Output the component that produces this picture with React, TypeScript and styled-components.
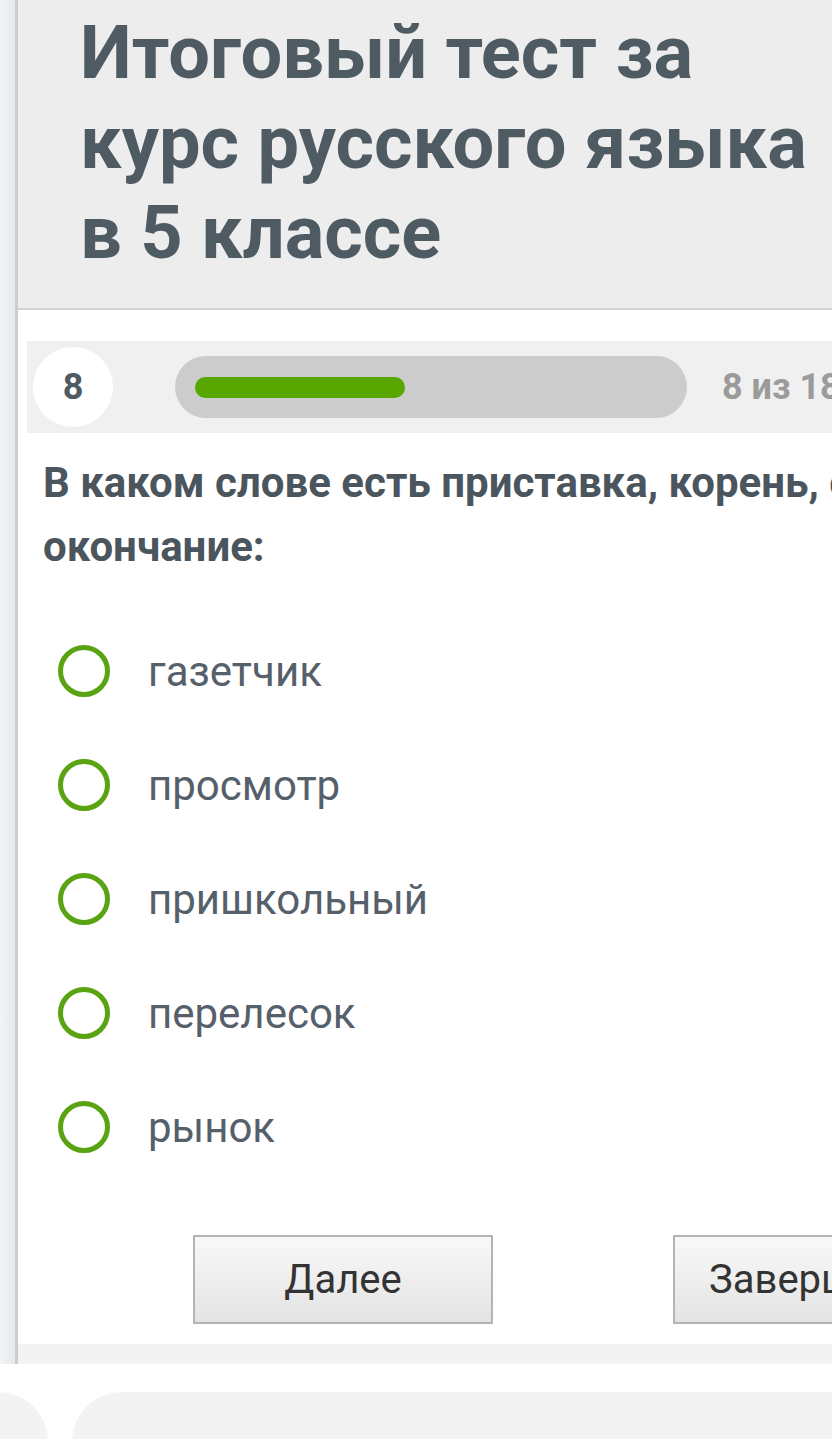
import styled, { createGlobalStyle } from 'styled-components';

const GlobalStyle = createGlobalStyle`
  html, body {
    margin: 0;
    padding: 0;
    background: #ffffff;
  }
  body {
    font-family: Roboto, 'Noto Sans', Arial, sans-serif;
    overflow: hidden;
  }
`;

const answers = ['газетчик', 'просмотр', 'пришкольный', 'перелесок', 'рынок'];
const current = 8;
const total = 18;

function App() {
  const progress = (current / total) * 100;

  return (
    <>
      <GlobalStyle />
      <Screen>
        <Page>
          <Gutter />
          <Main>
            <Header>
              <Title>Итоговый тест за курс русского языка в 5 классе</Title>
            </Header>

            <Content>
              <ProgressRow>
                <Number>{current}</Number>
                <Track>
                  <Fill style={{ width: `${progress}%` }} />
                </Track>
                <Counter>
                  {current} из {total}
                </Counter>
              </ProgressRow>

              <Question>В каком слове есть приставка, корень, суффикс и окончание:</Question>

              <Answers>
                {answers.map((a) => (
                  <Answer key={a}>
                    <Radio />
                    <AnswerText>{a}</AnswerText>
                  </Answer>
                ))}
              </Answers>

              <Buttons>
                <Button>Далее</Button>
                <Button>Завершить</Button>
              </Buttons>
            </Content>

            <BottomStrip />
          </Main>
        </Page>

        <Cards>
          <Card $side="left" />
          <Card $side="right" />
        </Cards>
      </Screen>
    </>
  );
}
export default App;

const Screen = styled.div`
  width: 832px;
  height: 1439px;
  overflow: hidden;
  background: #ffffff;
`;

const Page = styled.div`
  display: flex;
  width: 832px;
`;

const Gutter = styled.div`
  width: 15px;
  flex-shrink: 0;
  background: linear-gradient(to right, #f2f4f5, #e6e9eb);
`;

const Main = styled.div`
  flex: 1;
  min-width: 0;
  border-left: 3px solid #cdcdcd;
  overflow: hidden;
`;

const Header = styled.div`
  background: #ededed;
  border-bottom: 2px solid #d2d2d2;
  padding: 8px 0 30px 62px;
  height: 270px;
`;

const Title = styled.h1`
  margin: 0;
  font-family: Roboto, sans-serif;
  font-size: 74px;
  line-height: 90px;
  font-weight: 700;
  color: #4f5b62;
  width: 740px;
`;

const Content = styled.div`
  padding: 31px 0 20px 9px;
  width: 1000px;
`;

const ProgressRow = styled.div`
  display: flex;
  align-items: center;
  height: 92px;
  background: #f0f0f0;
  padding-left: 6px;
`;

const Number = styled.div`
  width: 80px;
  height: 80px;
  border-radius: 50%;
  background: #ffffff;
  display: flex;
  align-items: center;
  justify-content: center;
  font-size: 36px;
  font-weight: 700;
  color: #4f5b62;
  flex-shrink: 0;
`;

const Track = styled.div`
  margin-left: 62px;
  width: 512px;
  height: 62px;
  border-radius: 31px;
  background: #cccccc;
  padding: 0 20px;
  box-sizing: border-box;
  display: flex;
  align-items: center;
  flex-shrink: 0;
`;

const Fill = styled.div`
  height: 21px;
  border-radius: 11px;
  background: #58a700;
`;

const Counter = styled.div`
  margin-left: 35px;
  font-size: 36px;
  font-weight: 700;
  color: #9b9b9b;
  white-space: nowrap;
`;

const Question = styled.div`
  margin-top: 18px;
  padding-left: 16px;
  width: 1000px;
  font-size: 42px;
  line-height: 64px;
  font-weight: 700;
  color: #4a555d;
`;

const Answers = styled.div`
  margin-top: 35px;
  display: flex;
  flex-direction: column;
  padding-left: 31px;
`;

const Answer = styled.div`
  display: flex;
  align-items: center;
  height: 114px;
`;

const Radio = styled.div`
  width: 42px;
  height: 42px;
  border: 5px solid #5aa312;
  border-radius: 50%;
  flex-shrink: 0;
`;

const AnswerText = styled.div`
  margin-left: 38px;
  font-size: 42px;
  color: #56606a;
`;

const Buttons = styled.div`
  margin-top: 51px;
  display: flex;
  gap: 180px;
  padding-left: 166px;
`;

const Button = styled.button`
  width: 300px;
  height: 89px;
  border: 2px solid #b4b4b4;
  border-radius: 0;
  background: linear-gradient(to bottom, #f9f9f9, #e3e3e3);
  font-family: Roboto, sans-serif;
  font-size: 40px;
  color: #333333;
  white-space: nowrap;
  flex-shrink: 0;
  padding: 0 0 0 34px;
  text-align: left;
  &:first-child {
    padding: 0;
    text-align: center;
  }
`;

const BottomStrip = styled.div`
  height: 20px;
  background: #f3f3f4;
`;

const Cards = styled.div`
  display: flex;
  gap: 24px;
  margin-top: 28px;
  margin-left: -100px;
`;

const Card = styled.div<{ $side: 'left' | 'right' }>`
  height: 120px;
  background: #f3f3f3;
  flex-shrink: 0;
  width: ${(p) => (p.$side === 'left' ? '148px' : '900px')};
  border-radius: 50px 50px 0 0;
`;
